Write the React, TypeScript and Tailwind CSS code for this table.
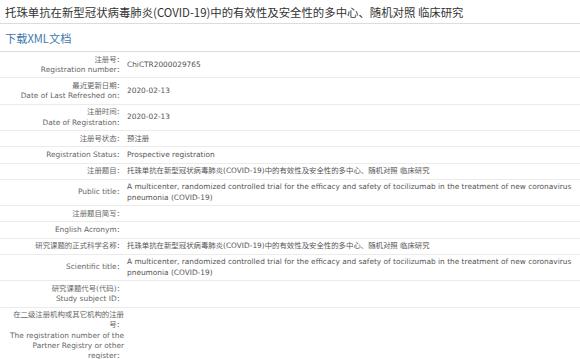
import React from "react";

type Row = {
  label: string[];
  value?: string;
};

const titleZh = "托珠单抗在新型冠状病毒肺炎(COVID-19)中的有效性及安全性的多中心、随机对照 临床研究";
const titleEn =
  "A multicenter, randomized controlled trial for the efficacy and safety of tocilizumab in the treatment of new coronavirus pneumonia (COVID-19)";

const rows: Row[] = [
  { label: ["注册号：", "Registration number："], value: "ChiCTR2000029765" },
  { label: ["最近更新日期：", "Date of Last Refreshed on："], value: "2020-02-13" },
  { label: ["注册时间：", "Date of Registration："], value: "2020-02-13" },
  { label: ["注册号状态："], value: "预注册" },
  { label: ["Registration Status："], value: "Prospective registration" },
  { label: ["注册题目："], value: titleZh },
  { label: ["Public title："], value: titleEn },
  { label: ["注册题目简写："] },
  { label: ["English Acronym："] },
  { label: ["研究课题的正式科学名称："], value: titleZh },
  { label: ["Scientific title："], value: titleEn },
  { label: ["研究课题代号(代码)：", "Study subject ID："] },
  {
    label: [
      "在二级注册机构或其它机构的注册号：",
      "The registration number of the Partner Registry or other register：",
    ],
  },
];

export default function App() {
  return (
    <div className="w-[580px] h-[359px] overflow-hidden bg-white">
      {/* Header */}
      <div className="h-[24px] border-b border-[#dcdcdc] px-[5px] flex items-center">
        <h1 className="text-[11.4px] leading-[14px] text-[#333] font-['Noto_Sans_CJK_SC',sans-serif] whitespace-nowrap">
          {titleZh}
        </h1>
      </div>
      <div className="h-[28px] border-b border-[#dcdcdc] px-[5px] flex items-center">
        <a className="text-[11.2px] leading-[14px] text-[#3f78ad] font-['Noto_Sans_CJK_SC',sans-serif]">
          下载XML文档
        </a>
      </div>

      {/* Details table */}
      <div className="font-['DejaVu_Sans','Noto_Sans_CJK_SC',sans-serif] text-[7.4px] leading-[10.2px]">
        {rows.map((row, i) => (
          <div key={i} className="flex border-b border-[#ebebeb]">
            <div className="w-[124px] shrink-0 py-[2.5px] flex flex-col justify-center text-right text-[#666]">
              {row.label.map((l, j) => (
                <div key={j}>{l}</div>
              ))}
            </div>
            <div className="flex-1 pl-[3px] pr-[4px] py-[2.5px] flex items-center text-[#555]">
              <div>{row.value ?? ""}</div>
            </div>
          </div>
        ))}
      </div>
    </div>
  );
}
